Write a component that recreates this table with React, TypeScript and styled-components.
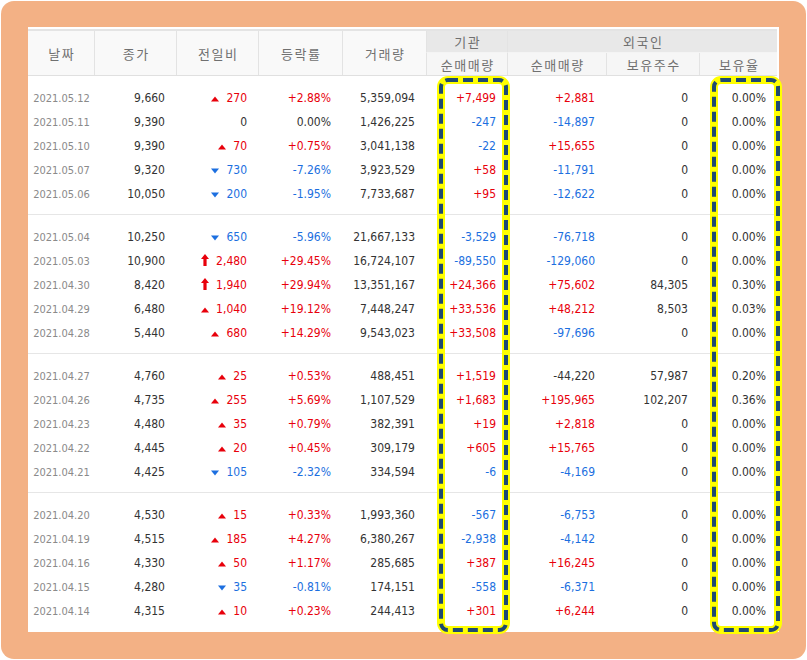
import React from 'react';
import styled, { createGlobalStyle } from 'styled-components';

type Move = 'up' | 'down' | 'limit' | 'none';

interface DayRow {
  date: string;
  close: string;
  move: Move;
  diff: string;
  rate: string;
  volume: string;
  inst: string;
  foreign: string;
  held: string;
  ratio: string;
}

const COLS = '66px 82px 82px 84px 84px 81px 99px 93px 78px';

const RED = '#e8000b';
const BLUE = '#1c6fe0';
const DARK = '#333333';

// values shown in plain colour even though they carry a sign
const NEUTRAL = new Set(['-44,220']);

const r = (
  date: string, close: string, move: Move, diff: string, rate: string,
  volume: string, inst: string, foreign: string, held: string, ratio: string,
): DayRow => ({ date, close, move, diff, rate, volume, inst, foreign, held, ratio });

const groups: DayRow[][] = [
  [
    r('2021.05.12', '9,660', 'up', '270', '+2.88%', '5,359,094', '+7,499', '+2,881', '0', '0.00%'),
    r('2021.05.11', '9,390', 'none', '0', '0.00%', '1,426,225', '-247', '-14,897', '0', '0.00%'),
    r('2021.05.10', '9,390', 'up', '70', '+0.75%', '3,041,138', '-22', '+15,655', '0', '0.00%'),
    r('2021.05.07', '9,320', 'down', '730', '-7.26%', '3,923,529', '+58', '-11,791', '0', '0.00%'),
    r('2021.05.06', '10,050', 'down', '200', '-1.95%', '7,733,687', '+95', '-12,622', '0', '0.00%'),
  ],
  [
    r('2021.05.04', '10,250', 'down', '650', '-5.96%', '21,667,133', '-3,529', '-76,718', '0', '0.00%'),
    r('2021.05.03', '10,900', 'limit', '2,480', '+29.45%', '16,724,107', '-89,550', '-129,060', '0', '0.00%'),
    r('2021.04.30', '8,420', 'limit', '1,940', '+29.94%', '13,351,167', '+24,366', '+75,602', '84,305', '0.30%'),
    r('2021.04.29', '6,480', 'up', '1,040', '+19.12%', '7,448,247', '+33,536', '+48,212', '8,503', '0.03%'),
    r('2021.04.28', '5,440', 'up', '680', '+14.29%', '9,543,023', '+33,508', '-97,696', '0', '0.00%'),
  ],
  [
    r('2021.04.27', '4,760', 'up', '25', '+0.53%', '488,451', '+1,519', '-44,220', '57,987', '0.20%'),
    r('2021.04.26', '4,735', 'up', '255', '+5.69%', '1,107,529', '+1,683', '+195,965', '102,207', '0.36%'),
    r('2021.04.23', '4,480', 'up', '35', '+0.79%', '382,391', '+19', '+2,818', '0', '0.00%'),
    r('2021.04.22', '4,445', 'up', '20', '+0.45%', '309,179', '+605', '+15,765', '0', '0.00%'),
    r('2021.04.21', '4,425', 'down', '105', '-2.32%', '334,594', '-6', '-4,169', '0', '0.00%'),
  ],
  [
    r('2021.04.20', '4,530', 'up', '15', '+0.33%', '1,993,360', '-567', '-6,753', '0', '0.00%'),
    r('2021.04.19', '4,515', 'up', '185', '+4.27%', '6,380,267', '-2,938', '-4,142', '0', '0.00%'),
    r('2021.04.16', '4,330', 'up', '50', '+1.17%', '285,685', '+387', '+16,245', '0', '0.00%'),
    r('2021.04.15', '4,280', 'down', '35', '-0.81%', '174,151', '-558', '-6,371', '0', '0.00%'),
    r('2021.04.14', '4,315', 'up', '10', '+0.23%', '244,413', '+301', '+6,244', '0', '0.00%'),
  ],
];

const toneOf = (v: string) => {
  if (NEUTRAL.has(v)) return DARK;
  if (v.startsWith('+')) return RED;
  if (v.startsWith('-')) return BLUE;
  return DARK;
};

const moveTone = (m: Move) => (m === 'down' ? BLUE : m === 'none' ? DARK : RED);

const GlobalStyle = createGlobalStyle`
  html, body {
    margin: 0;
    padding: 0;
    background: #ffffff;
  }
  * { box-sizing: border-box; }
`;

const Frame = styled.div`
  width: 805px;
  height: 658px;
  margin: 1px;
  padding: 26px 27px 27px 27px;
  background: #f3b185;
  border-radius: 13px;
`;

const Panel = styled.div`
  position: relative;
  width: 751px;
  height: 605px;
  padding-top: 2px;
  background: #ffffff;
`;

const Table = styled.div`
  width: 749px;
  font-family: "DejaVu Sans Condensed", "DejaVu Sans", Tahoma, sans-serif;
  font-size: 12px;
  color: ${DARK};
`;

const Head = styled.div`
  display: grid;
  grid-template-columns: ${COLS};
  grid-template-rows: 22px 22px;
  border-top: 2px solid #e4e4e4;
  border-bottom: 1px solid #e0e0e0;
  background: #f9f9f9;
`;

const HeadCell = styled.div<{ $span?: number; $tall?: boolean; $tone?: 'group' | 'sub' }>`
  display: flex;
  align-items: center;
  justify-content: center;
  grid-row: ${(p) => (p.$tall ? 'span 2' : 'auto')};
  grid-column: ${(p) => (p.$span ? `span ${p.$span}` : 'auto')};
  background: ${(p) => (p.$tone === 'group' ? '#e8e8e8' : p.$tone === 'sub' ? '#f6f6f6' : '#f9f9f9')};
  border-left: 1px solid #e3e3e3;
  border-bottom: ${(p) => (p.$tone === 'group' ? '1px solid #f4f4f4' : 'none')};
  font-family: "Noto Sans CJK KR", "Noto Sans", sans-serif;
  font-size: 13px;
  letter-spacing: 1.5px;
  padding-left: 1.5px;
  color: #707070;

  &:first-child {
    border-left: none;
  }
`;

const Group = styled.div<{ $last?: boolean }>`
  padding: 10px 0 8px;
  border-bottom: ${(p) => (p.$last ? 'none' : '1px solid #e6e6e6')};
`;

const Row = styled.div`
  display: grid;
  grid-template-columns: ${COLS};
  height: 24px;
  align-items: center;
`;

const DateCell = styled.div`
  text-align: center;
  padding-left: 1px;
  font-size: 11px;
  color: #8a8a8a;
`;

const Num = styled.div<{ $color?: string }>`
  text-align: right;
  padding-right: 11px;
  color: ${(p) => p.$color ?? DARK};
  white-space: nowrap;
`;

const Change = styled.div<{ $color: string }>`
  display: flex;
  align-items: center;
  justify-content: flex-end;
  gap: 7px;
  padding-right: 11px;
  color: ${(p) => p.$color};
`;

const Mark = styled.svg`
  display: block;
  margin-top: 1px;
`;

const Highlight = styled.svg<{ $left: number }>`
  position: absolute;
  top: 49px;
  left: ${(p) => p.$left}px;
  overflow: visible;
  pointer-events: none;
`;

function MoveMark({ move }: { move: Move }) {
  if (move === 'up') {
    return (
      <Mark width="8" height="6" viewBox="0 0 8 6">
        <polygon points="4,0.5 8,5.5 0,5.5" fill={RED} />
      </Mark>
    );
  }
  if (move === 'down') {
    return (
      <Mark width="8" height="6" viewBox="0 0 8 6">
        <polygon points="0,0.5 8,0.5 4,5.5" fill={BLUE} />
      </Mark>
    );
  }
  if (move === 'limit') {
    return (
      <Mark width="8" height="12" viewBox="0 0 8 12" style={{ marginTop: -3 }}>
        <polygon points="4,0 8,5 5.6,5 5.6,12 2.4,12 2.4,5 0,5" fill={RED} />
      </Mark>
    );
  }
  return null;
}

function DashedBox({ left, width }: { left: number; width: number }) {
  const h = 558;
  return (
    <Highlight $left={left} width={width} height={h} viewBox={`0 0 ${width} ${h}`}>
      <rect x="4" y="4" width={width - 8} height={h - 8} rx="7" fill="none" stroke="#ffff00" strokeWidth="8" />
      <rect
        x="4" y="4" width={width - 8} height={h - 8} rx="7" fill="none"
        stroke="#1f4a72" strokeWidth="4" strokeDasharray="10 5"
      />
    </Highlight>
  );
}

export default function App() {
  return (
    <>
      <GlobalStyle />
      <Frame>
        <Panel>
          <Table>
            <Head>
              <HeadCell $tall>날짜</HeadCell>
              <HeadCell $tall>종가</HeadCell>
              <HeadCell $tall>전일비</HeadCell>
              <HeadCell $tall>등락률</HeadCell>
              <HeadCell $tall>거래량</HeadCell>
              <HeadCell $tone="group">기관</HeadCell>
              <HeadCell $tone="group" $span={3}>외국인</HeadCell>
              <HeadCell $tone="sub">순매매량</HeadCell>
              <HeadCell $tone="sub">순매매량</HeadCell>
              <HeadCell $tone="sub">보유주수</HeadCell>
              <HeadCell $tone="sub">보유율</HeadCell>
            </Head>
            {groups.map((rows, gi) => (
              <Group key={gi} $last={gi === groups.length - 1}>
                {rows.map((d) => (
                  <Row key={d.date}>
                    <DateCell>{d.date}</DateCell>
                    <Num>{d.close}</Num>
                    <Change $color={moveTone(d.move)}>
                      <MoveMark move={d.move} />
                      <span>{d.diff}</span>
                    </Change>
                    <Num $color={toneOf(d.rate)}>{d.rate}</Num>
                    <Num>{d.volume}</Num>
                    <Num $color={toneOf(d.inst)}>{d.inst}</Num>
                    <Num $color={toneOf(d.foreign)}>{d.foreign}</Num>
                    <Num>{d.held}</Num>
                    <Num>{d.ratio}</Num>
                  </Row>
                ))}
              </Group>
            ))}
          </Table>
          <DashedBox left={409} width={73} />
          <DashedBox left={682} width={72} />
        </Panel>
      </Frame>
    </>
  );
}
